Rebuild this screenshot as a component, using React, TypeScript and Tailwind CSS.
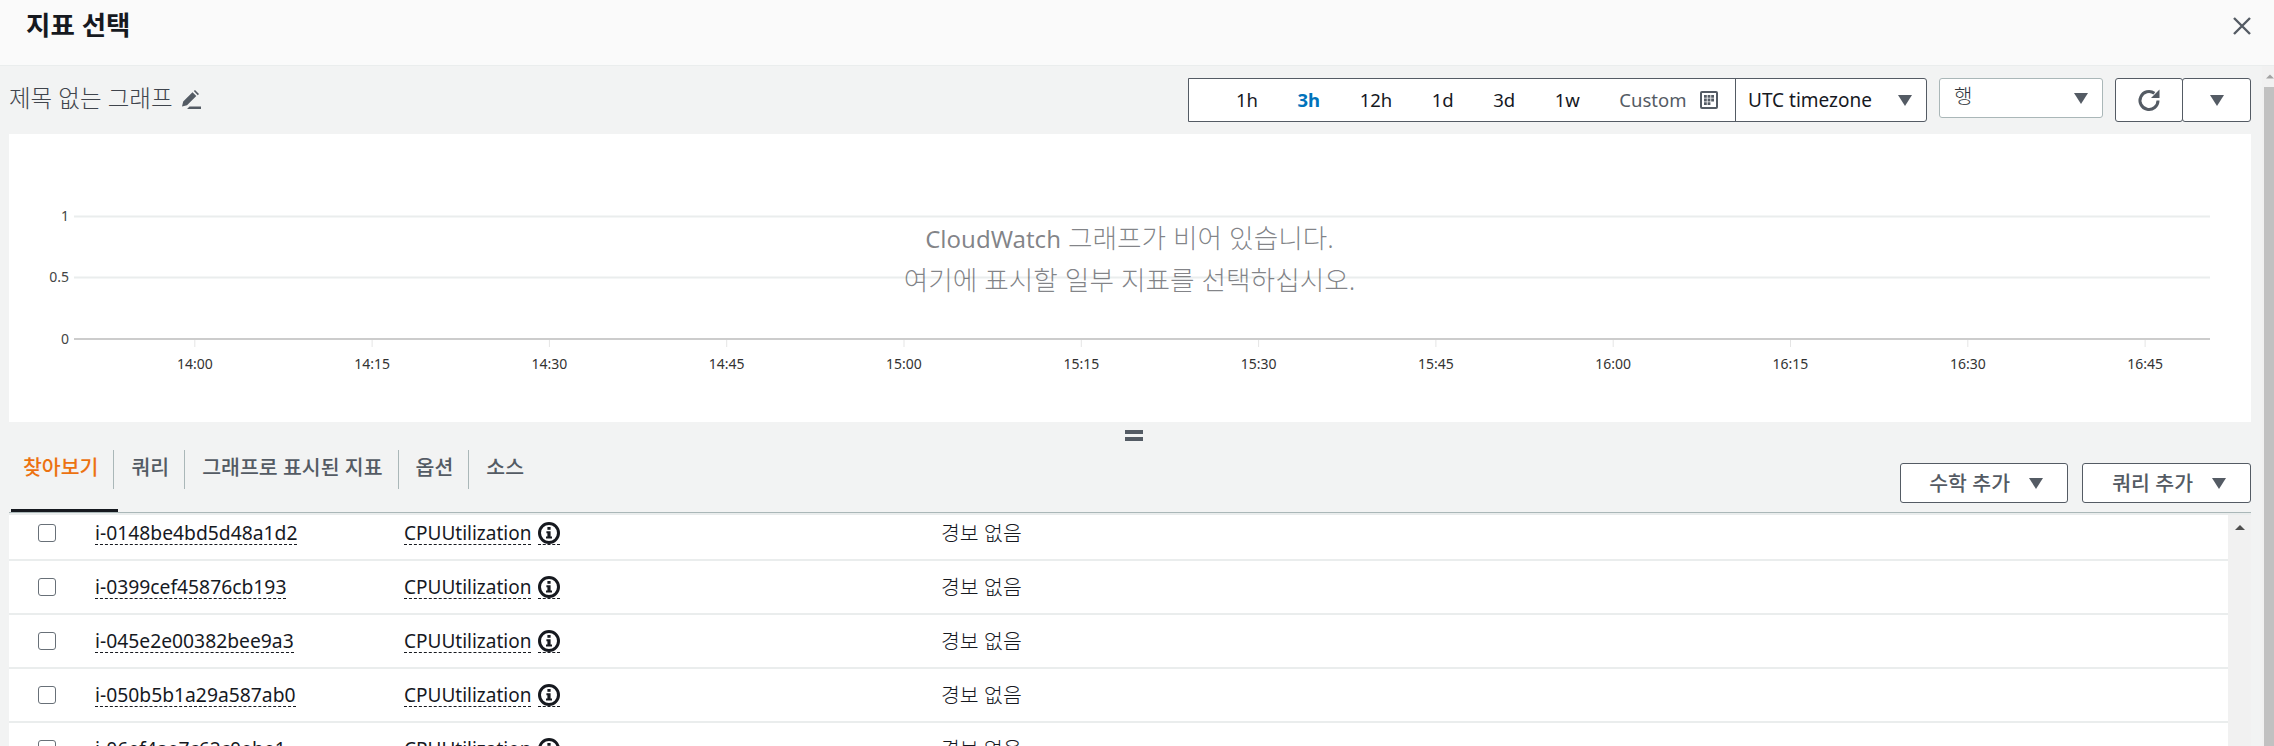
const font = "font-['Noto_Sans','Noto_Sans_CJK_KR',sans-serif]"

const ranges = ["1h", "3h", "12h", "1d", "3d", "1w"]
const xTicks = ["14:00", "14:15", "14:30", "14:45", "15:00", "15:15", "15:30", "15:45", "16:00", "16:15", "16:30", "16:45"]
const tabs = ["찾아보기", "쿼리", "그래프로 표시된 지표", "옵션", "소스"]
const instances = ["i-0148be4bd5d48a1d2", "i-0399cef45876cb193", "i-045e2e00382bee9a3", "i-050b5b1a29a587ab0", "i-06ef4ae7c62c0ebe1"]

function Caret() {
  return (
    <svg width="14" height="11" viewBox="0 0 14 11" className="shrink-0">
      <path d="M0 0h14L7 11z" fill="#545b64" />
    </svg>
  )
}

function InfoIcon() {
  return (
    <svg width="22" height="22" viewBox="0 0 22 22" className="shrink-0">
      <circle cx="11" cy="11" r="9.5" fill="none" stroke="#16191f" strokeWidth="3" />
      <rect x="9.4" y="5" width="3.2" height="2.8" fill="#16191f" />
      <path d="M8.4 9.2h4.2v5.2h1.4v2H8v-2h1.4v-3.2h-1z" fill="#16191f" />
    </svg>
  )
}

function Chart() {
  return (
    <div className="relative h-[288px] bg-white">
      <svg width="2242" height="288" className="block">
        <g stroke="#eaeded" strokeWidth="2">
          <line x1="65" x2="2201" y1="82.5" y2="82.5" />
          <line x1="65" x2="2201" y1="143.5" y2="143.5" />
        </g>
        <line x1="65" x2="2201" y1="205" y2="205" stroke="#cccccc" strokeWidth="2" />
        <g fontFamily="'Noto Sans',sans-serif" fontSize="14" fill="#444" textAnchor="end">
          <text x="60" y="87">1</text>
          <text x="60" y="148">0.5</text>
          <text x="60" y="210">0</text>
        </g>
        {xTicks.map((t, i) => (
          <g key={t}>
            <line x1={185.8 + i * 177.3} x2={185.8 + i * 177.3} y1="206" y2="213" stroke="#e5e5e5" />
            <text x={185.8 + i * 177.3} y="235" fontFamily="'Noto Sans',sans-serif" fontSize="14" fill="#333" textAnchor="middle">{t}</text>
          </g>
        ))}
      </svg>
      <div className="absolute left-0 right-[1px] top-[84px] text-center text-[26.7px] font-light leading-[40.5px] text-[#16191f]/55">
        <p><span className="text-[24px] font-normal">CloudWatch</span> 그래프가 비어 있습니다.</p>
        <p>여기에 표시할 일부 지표를 선택하십시오.</p>
      </div>
    </div>
  )
}

function Toolbar() {
  return (
    <div className="flex h-[68px] items-center justify-between pl-[9px]">
      <div className="flex items-center gap-[8px] text-[23.5px] font-light text-[#3f444c]">
        <span className="pb-[2px]">제목 없는 그래프</span>
        <svg width="20" height="20" viewBox="0 0 20 20">
          <path d="M1 16.5l1.2-5L11.5 2.2l3.8 3.8L6 15.3zM12.8 1l1.2-1 4 4-1.2 1.2zM6 19h14v-2.6H8.5z" fill="#545b64" />
        </svg>
      </div>
      <div className="flex items-center">
        <div className="flex h-[44px] w-[739px] items-center rounded-r-[3px] border border-[#545b64] bg-white text-[18.5px] text-[#16191f]">
          <div className="flex w-[547px] items-center gap-[39.5px] self-stretch border-r border-[#545b64] pl-[47px]">
            {ranges.map((r) => (
              <span key={r} className={r === "3h" ? "font-bold text-[#0073bb]" : ""}>{r}</span>
            ))}
            <div className="flex items-center gap-[14px]">
              <span className="text-[#545b64]">Custom</span>
              <svg width="18" height="18" viewBox="0 0 18 18">
                <rect x="0" y="0" width="18" height="18" rx="2" fill="#545b64" />
                <rect x="2" y="2" width="14" height="14" fill="#fff" />
                <path d="M4 4h2.8v2.8H4zM7.6 4h2.8v2.8H7.6zM11.2 4H14v2.8h-2.8zM4 7.6h2.8v2.8H4zM7.6 7.6h2.8v2.8H7.6zM11.2 7.6H14v2.8h-2.8zM4 11.2h2.8V14H4zM7.6 11.2h2.8V14H7.6z" fill="#545b64" />
              </svg>
            </div>
          </div>
          <div className="flex flex-1 items-center justify-between pl-3 pr-[14px] text-[19px]">
            <span>UTC timezone</span>
            <Caret />
          </div>
        </div>
        <div className="ml-3 flex h-[40px] w-[164px] items-center justify-between self-start rounded-[3px] border border-[#aab7b8] bg-white px-[14px] text-[20px] font-light text-[#2f343a]">
          <span className="pb-[3px]">행</span>
          <Caret />
        </div>
        <div className="ml-3 flex">
          <button className="flex h-[44px] w-[68px] items-center justify-center rounded-[3px] border border-[#545b64] bg-white">
            <svg width="24" height="24" viewBox="0 0 24 24" fill="none" stroke="#545b64" strokeWidth="3">
              <path d="M21 12.5a9 9 0 1 1-3.6-7.2" />
              <path d="M22.5 1.5v8.5H14z" fill="#545b64" stroke="none" />
            </svg>
          </button>
          <button className="-ml-px flex h-[44px] w-[69px] items-center justify-center rounded-[3px] border border-[#545b64] bg-white">
            <Caret />
          </button>
        </div>
      </div>
    </div>
  )
}

function TabBar() {
  return (
    <div className="flex h-[71px] shrink-0 items-start justify-between border-b border-[#aab7b8]">
      <div className="flex pt-[8px]">
        {tabs.map((tab, i) => (
          <div key={tab} className="h-[62px]">
            <div className={`flex h-[39px] items-center pb-[5px] pr-[15px] text-[20.5px] font-medium ${i < tabs.length - 1 ? "border-r border-[#aab7b8]" : ""} ${i === 0 ? "pl-[14px] font-bold text-[#ec7211]" : "pl-[17px] text-[#545b64]"}`}>
              {tab}
            </div>
          </div>
        ))}
      </div>
      <div className="flex gap-[14px] pt-[21px]">
        {["수학 추가", "쿼리 추가"].map((label, i) => (
          <button key={label} className={`flex h-[40px] items-center justify-end gap-[19px] rounded-[3px] border border-[#545b64] bg-white pr-6 text-[20.5px] font-medium text-[#545b64] ${i === 0 ? "w-[168px]" : "w-[169px]"}`}>
            {label}
            <Caret />
          </button>
        ))}
      </div>
    </div>
  )
}

function MetricRows() {
  return (
    <div className="flex min-h-0 flex-1">
      <div className="flex-1 overflow-hidden bg-white">
        <div className="-mt-[8px]">
          {instances.map((id) => (
            <div key={id} className="flex h-[54px] items-center border-b-2 border-[#eaeded] text-[19px] text-[#16191f]">
              <div className="w-[86px] pl-[29px]">
                <div className="h-[18px] w-[18px] rounded-[3px] border border-[#687078] bg-white" />
              </div>
              <div className="w-[309px]">
                <span className="inline-block border-b border-dashed border-[#16191f] text-[19.3px] leading-[22px]">{id}</span>
              </div>
              <div className="flex w-[537px] items-center gap-[7px]">
                <span className="inline-block border-b border-dashed border-[#16191f] leading-[22px]">CPUUtilization</span>
                <span className="inline-flex h-[23px] border-b border-dashed border-[#16191f]"><InfoIcon /></span>
              </div>
              <span className="text-[20.5px] font-light">경보 없음</span>
            </div>
          ))}
        </div>
      </div>
      <div className="flex w-[23px] justify-center bg-[#f1f1f1] pt-[10px]">
        <svg width="10" height="5" viewBox="0 0 10 5">
          <path d="M0 5L5 0l5 5z" fill="#505050" />
        </svg>
      </div>
    </div>
  )
}

export default function App() {
  return (
    <div className={`flex h-[746px] w-full flex-col overflow-hidden bg-[#f2f3f3] ${font}`}>
      <div className="flex h-[66px] shrink-0 items-start justify-between border-b border-[#eaeded] bg-[#fafafa] pl-[26px] pr-[22px] pt-[8px]">
        <h1 className="text-[26.5px] font-bold leading-[34px] text-[#16191f]">지표 선택</h1>
        <svg width="20" height="20" viewBox="0 0 20 20" className="mt-[8px]" fill="none" stroke="#545b64" strokeWidth="2.4">
          <path d="M2 2l16 16M18 2L2 18" />
        </svg>
      </div>
      <div className="flex min-h-0 flex-1">
        <div className="flex min-w-0 flex-1 flex-col pr-[11px]">
          <Toolbar />
          <div className="pl-[9px]">
            <Chart />
          </div>
          <div className="relative flex min-h-0 flex-1 flex-col pl-[9px]">
            <div className="flex h-[20px] shrink-0 flex-col items-center gap-[3px] pl-[8px] pt-[8px]">
              <div className="h-[4px] w-[18px] bg-[#545b64]" />
              <div className="h-[4px] w-[18px] bg-[#545b64]" />
            </div>
            <TabBar />
            {/* active tab underline sits on the bar's bottom edge */}
            <div className="absolute left-[11px] top-[87px] h-[3px] w-[107px] bg-[#16191f]" />
            <div className="h-[2px] shrink-0 bg-[#eaeded]" />
            <MetricRows />
          </div>
        </div>
        <div className="flex w-[12px] shrink-0 flex-col bg-[#f1f1f1]">
          <div className="flex h-[21px] items-center justify-center pl-[4px]">
            <svg width="10" height="5" viewBox="0 0 10 5"><path d="M0 5L5 0l5 5z" fill="#a3a3a3" /></svg>
          </div>
          <div className="ml-[2px] flex-1 bg-[#c1c1c1]" />
        </div>
      </div>
    </div>
  )
}
